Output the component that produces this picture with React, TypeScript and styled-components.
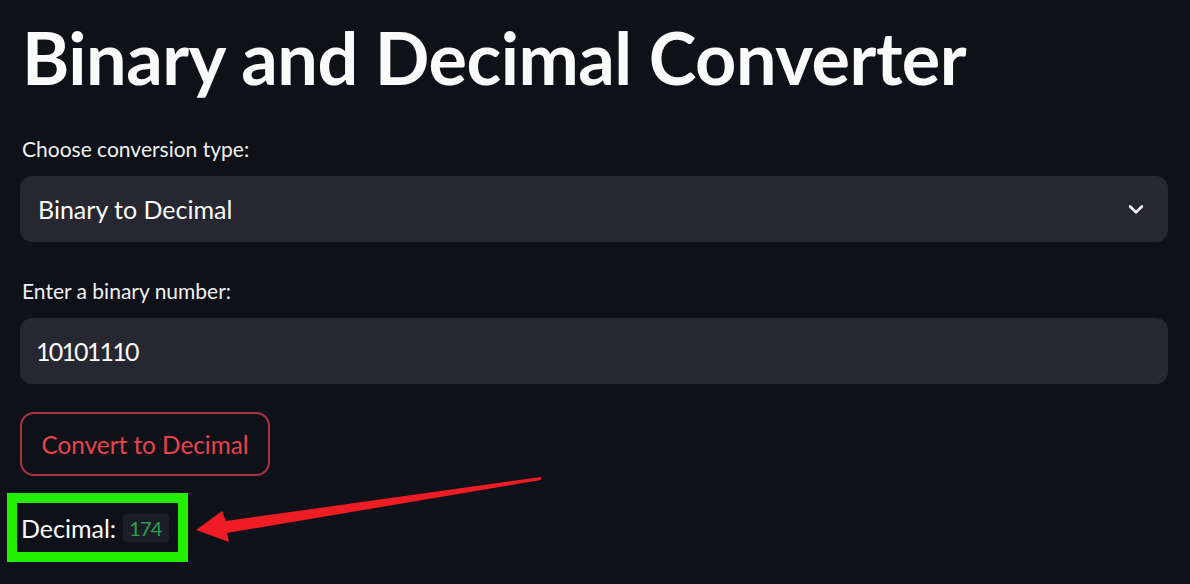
import React from 'react';
import styled, { createGlobalStyle } from 'styled-components';

const Global = createGlobalStyle`
  html, body { margin: 0; padding: 0; background: #0e1117; }
  body { font-family: Lato, "Noto Sans", sans-serif; color: #fafafa; }
  * { box-sizing: border-box; }
`;

const Page = styled.main`
  position: relative;
  width: 1190px;
  height: 584px;
  overflow: hidden;
  padding: 0 22px 0 20px;
  display: flex;
  flex-direction: column;
`;

const Title = styled.h1`
  margin: 12px 0 0 2px;
  font-size: 72px;
  font-weight: 700;
  line-height: 90px;
  letter-spacing: -0.5px;
  color: #fafafa;
`;

const Label = styled.label<{ $top: number }>`
  display: block;
  margin: ${(p) => p.$top}px 0 0 2px;
  font-size: 21px;
  line-height: 30px;
  color: #f0f0f2;
`;

const Field = styled.div`
  margin-top: 12px;
  height: 66px;
  background: #262730;
  border-radius: 12px;
  display: flex;
  align-items: center;
  justify-content: space-between;
  padding: 0 22px 0 18px;
  font-size: 25px;
  color: #fafafa;
`;

const Digits = styled.span`
  letter-spacing: -1.8px;
  margin-left: -2px;
`;

const Chevron = styled.svg`
  width: 20px;
  height: 20px;
`;

const Button = styled.button`
  margin-top: 28px;
  align-self: flex-start;
  width: 250px;
  height: 64px;
  background: transparent;
  border: 2px solid #a8343f;
  border-radius: 14px;
  color: #e8424e;
  font-family: Lato, "Noto Sans", sans-serif;
  font-size: 24.3px;
  padding: 0;
`;

const Highlight = styled.div`
  margin: 17px 0 0 -13px;
  align-self: flex-start;
  width: 181px;
  height: 69px;
  border: 10px solid #22ee00;
  display: flex;
  align-items: center;
  gap: 7px;
  padding-left: 4px;
`;

const ResultLabel = styled.span`
  font-size: 25px;
  color: #fafafa;
`;

const Code = styled.code`
  background: #1b1e26;
  color: #2e9e55;
  font-family: Lato, "Noto Sans", sans-serif;
  font-size: 20px;
  letter-spacing: -0.8px;
  padding: 3px 7px 3px 6px;
  border-radius: 4px;
  line-height: 22px;
`;

const Arrow = styled.svg`
  position: absolute;
  left: 0;
  top: 0;
  pointer-events: none;
`;

export default function App() {
  return (
    <>
      <Global />
      <Page>
        <Title>Binary and Decimal Converter</Title>
        <Label $top={32}>Choose conversion type:</Label>
        <Field>
          <span>Binary to Decimal</span>
          <Chevron viewBox="0 0 24 24" fill="none" stroke="#fafafa" strokeWidth="3.2" strokeLinecap="round" strokeLinejoin="round">
            <polyline points="5 9 12 16 19 9" />
          </Chevron>
        </Field>
        <Label $top={34}>Enter a binary number:</Label>
        <Field>
          <Digits>10101110</Digits>
        </Field>
        <Button>Convert to Decimal</Button>
        <Highlight>
          <ResultLabel>Decimal:</ResultLabel>
          <Code>174</Code>
        </Highlight>
        <Arrow width="1190" height="584" viewBox="0 0 1190 584">
          <polygon points="541,477 226,521 222,511 196,530 229,542 227,533 541,480" fill="#ee1c25" />
        </Arrow>
      </Page>
    </>
  );
}
